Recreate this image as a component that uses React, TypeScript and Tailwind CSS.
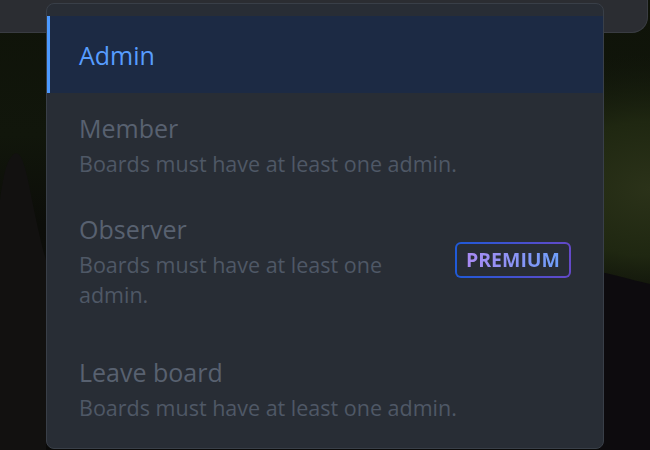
import React from "react";

const FONT = { fontFamily: '"Open Sans", "Noto Sans", Arial, sans-serif' };

interface RoleOption {
  id: string;
  title: string;
  description?: string;
  active?: boolean;
  premium?: boolean;
  spaced?: boolean;
}

const OPTIONS: RoleOption[] = [
  { id: "admin", title: "Admin", active: true },
  { id: "member", title: "Member", description: "Boards must have at least one admin." },
  {
    id: "observer",
    title: "Observer",
    description: "Boards must have at least one admin.",
    premium: true,
  },
  {
    id: "leave",
    title: "Leave board",
    description: "Boards must have at least one admin.",
    spaced: true,
  },
];

function Backdrop() {
  // photo behind the menu: dark forest, a rock on the left, green glow on the right
  return (
    <svg className="absolute inset-0" width="650" height="450" viewBox="0 0 650 450">
      <defs>
        <linearGradient id="sky" x1="0" y1="0" x2="0" y2="1">
          <stop offset="0" stopColor="#0f1309" />
          <stop offset="0.3" stopColor="#11160b" />
          <stop offset="0.5" stopColor="#0c0d09" />
          <stop offset="1" stopColor="#0a0a09" />
        </linearGradient>
        <radialGradient id="glow" cx="1" cy="0.42" r="0.3">
          <stop offset="0" stopColor="#2b3219" />
          <stop offset="0.5" stopColor="#1f2711" />
          <stop offset="1" stopColor="#141a0c" stopOpacity="0" />
        </radialGradient>
      </defs>
      <rect width="650" height="450" fill="url(#sky)" />
      <rect width="650" height="450" fill="url(#glow)" />
      <path d="M600 272 C620 276 640 282 650 284 L650 450 L600 450 Z" fill="#0d0b0e" />
      <path
        d="M0 200 C4 170 8 158 14 154 C20 150 24 162 28 180 C32 200 40 240 46 260 L46 450 L0 450 Z"
        fill="#121110"
      />
    </svg>
  );
}

function PremiumBadge() {
  return (
    <span className="shrink-0 rounded-[6px] p-[2px] bg-[linear-gradient(90deg,#1f5ad8,#6449c8)]">
      <span className="flex h-[32px] items-center rounded-[4px] bg-[#282d35] px-[9px]">
        <span className="bg-[linear-gradient(90deg,#a98af2,#6e9ef9)] bg-clip-text text-[19.5px] font-bold leading-none text-transparent">
          PREMIUM
        </span>
      </span>
    </span>
  );
}

function OptionRow({ option }: { option: RoleOption }) {
  if (option.active) {
    return (
      <div className="border-l-[3px] border-[#4c9aff] bg-[#1c2a44] pb-[18px] pl-[29px] pr-[32px] pt-[19px]">
        <div className="text-[25px] leading-[40px] text-[#579dff]">{option.title}</div>
      </div>
    );
  }
  return (
    <div className={`flex items-center gap-[16px] px-[32px] py-[15px] ${option.spaced ? "mt-[12px]" : ""}`}>
      <div className="flex-1">
        <div className="text-[25px] leading-[40px] text-[#586170]">{option.title}</div>
        {option.description && (
          <div className="mt-[1px] text-[21.5px] leading-[30px] text-[#4f5866]">{option.description}</div>
        )}
      </div>
      {option.premium && <PremiumBadge />}
    </div>
  );
}

export default function App() {
  return (
    <div className="relative h-[450px] w-[650px] overflow-hidden bg-[#0b0b0a]" style={FONT}>
      <Backdrop />
      <div className="relative h-[33px] w-[648px] rounded-br-[16px] border-b border-r border-[#393c42] bg-[#2b2d32]" />
      <div className="absolute left-[46px] top-[3px] w-[558px] rounded-[8px] border border-[#393f48] bg-[#282d35] pb-[10px] pt-[12px]">
        {OPTIONS.map((option) => (
          <OptionRow key={option.id} option={option} />
        ))}
      </div>
    </div>
  );
}
